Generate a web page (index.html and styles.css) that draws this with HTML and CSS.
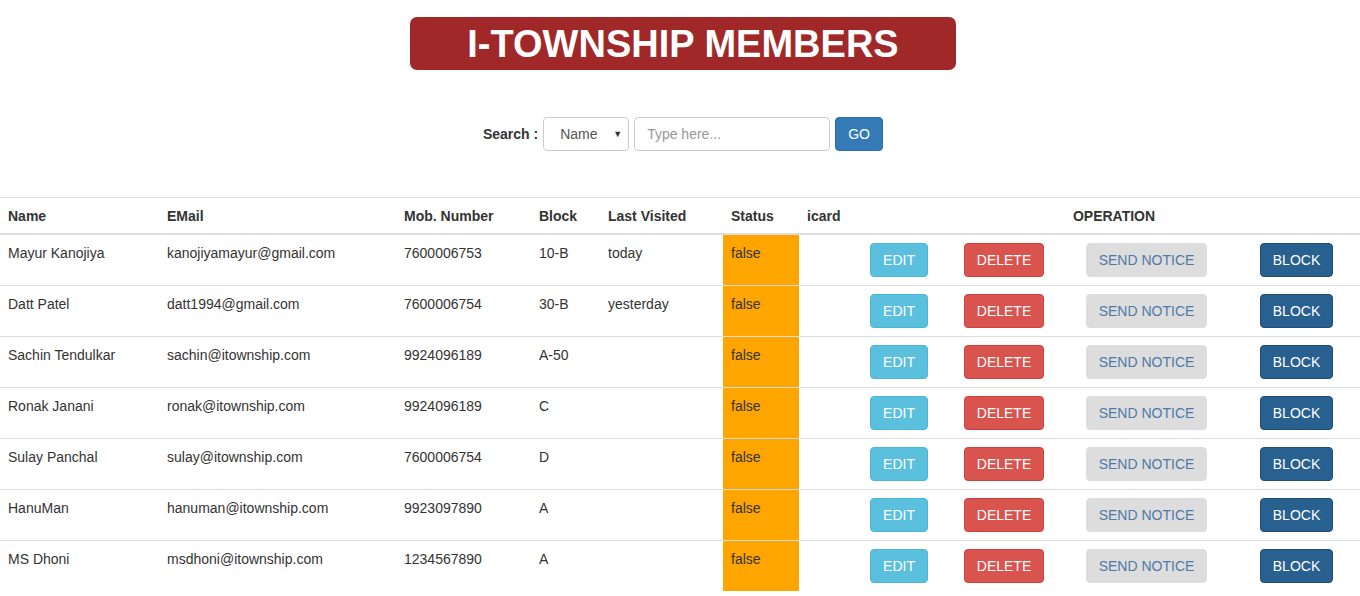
FILE: index.html
```html
<!DOCTYPE html>
<html>
<head>
<meta charset="utf-8">
<link rel="stylesheet" href="styles.css">
</head>
<body>
<header class="top">
  <h1 class="title">I-TOWNSHIP MEMBERS</h1>
  <form class="search">
    <label class="search-label">Search :</label>
    <div class="select"><span>Name</span><span class="caret">&#9660;</span></div>
    <input class="search-input" type="text" placeholder="Type here...">
    <button class="btn btn-go" type="button">GO</button>
  </form>
</header>
<table class="members">
  <colgroup>
    <col class="c-name"><col class="c-email"><col class="c-mob"><col class="c-block"><col class="c-last"><col class="c-status"><col class="c-icard"><col class="c-edit"><col class="c-del"><col class="c-notice"><col class="c-blk">
  </colgroup>
  <thead>
    <tr><th>Name</th><th>EMail</th><th>Mob. Number</th><th>Block</th><th>Last Visited</th><th>Status</th><th>icard</th><th colspan="4" class="op">OPERATION</th></tr>
  </thead>
  <tbody>
    <tr><td>Mayur Kanojiya</td><td>kanojiyamayur@gmail.com</td><td>7600006753</td><td>10-B</td><td>today</td><td class="status">false</td><td></td><td><button class="btn btn-edit">EDIT</button></td><td><button class="btn btn-del">DELETE</button></td><td><button class="btn btn-notice">SEND NOTICE</button></td><td><button class="btn btn-block">BLOCK</button></td></tr>
    <tr><td>Datt Patel</td><td>datt1994@gmail.com</td><td>7600006754</td><td>30-B</td><td>yesterday</td><td class="status">false</td><td></td><td><button class="btn btn-edit">EDIT</button></td><td><button class="btn btn-del">DELETE</button></td><td><button class="btn btn-notice">SEND NOTICE</button></td><td><button class="btn btn-block">BLOCK</button></td></tr>
    <tr><td>Sachin Tendulkar</td><td>sachin@itownship.com</td><td>9924096189</td><td>A-50</td><td></td><td class="status">false</td><td></td><td><button class="btn btn-edit">EDIT</button></td><td><button class="btn btn-del">DELETE</button></td><td><button class="btn btn-notice">SEND NOTICE</button></td><td><button class="btn btn-block">BLOCK</button></td></tr>
    <tr><td>Ronak Janani</td><td>ronak@itownship.com</td><td>9924096189</td><td>C</td><td></td><td class="status">false</td><td></td><td><button class="btn btn-edit">EDIT</button></td><td><button class="btn btn-del">DELETE</button></td><td><button class="btn btn-notice">SEND NOTICE</button></td><td><button class="btn btn-block">BLOCK</button></td></tr>
    <tr><td>Sulay Panchal</td><td>sulay@itownship.com</td><td>7600006754</td><td>D</td><td></td><td class="status">false</td><td></td><td><button class="btn btn-edit">EDIT</button></td><td><button class="btn btn-del">DELETE</button></td><td><button class="btn btn-notice">SEND NOTICE</button></td><td><button class="btn btn-block">BLOCK</button></td></tr>
    <tr><td>HanuMan</td><td>hanuman@itownship.com</td><td>9923097890</td><td>A</td><td></td><td class="status">false</td><td></td><td><button class="btn btn-edit">EDIT</button></td><td><button class="btn btn-del">DELETE</button></td><td><button class="btn btn-notice">SEND NOTICE</button></td><td><button class="btn btn-block">BLOCK</button></td></tr>
    <tr><td>MS Dhoni</td><td>msdhoni@itownship.com</td><td>1234567890</td><td>A</td><td></td><td class="status">false</td><td></td><td><button class="btn btn-edit">EDIT</button></td><td><button class="btn btn-del">DELETE</button></td><td><button class="btn btn-notice">SEND NOTICE</button></td><td><button class="btn btn-block">BLOCK</button></td></tr>
  </tbody>
</table>
</body>
</html>
```
FILE: styles.css
```css
* { box-sizing: border-box; }
html, body { margin: 0; padding: 0; background: #fff; }
body {
  font-family: "Liberation Sans", Arial, sans-serif;
  font-size: 14px;
  line-height: 20px;
  color: #333;
}
.top {
  display: flex;
  flex-direction: column;
  align-items: center;
  padding-top: 17px;
  padding-left: 6px;
}
.title {
  margin: 0;
  width: 546px;
  height: 53px;
  background: #a02828;
  color: #fff;
  border-radius: 7px;
  font-size: 38px;
  font-weight: bold;
  line-height: 54px;
  text-align: center;
}
.search {
  margin: 47px 0 0;
  display: flex;
  align-items: center;
  gap: 5px;
  height: 34px;
}
.search-label { font-weight: bold; }
.select {
  width: 86px;
  height: 34px;
  border: 1px solid #ccc;
  border-radius: 4px;
  display: flex;
  align-items: center;
  justify-content: space-between;
  padding: 0 6px 0 16px;
  color: #555;
}
.caret { font-size: 9px; color: #333; }
.search-input {
  width: 196px;
  height: 34px;
  border: 1px solid #ccc;
  border-radius: 4px;
  padding: 0 12px;
  font-family: inherit;
  font-size: 14px;
  color: #555;
}
.search-input::placeholder { color: #999; }
.btn {
  display: inline-block;
  height: 34px;
  padding: 6px 0;
  border: 1px solid transparent;
  border-radius: 4px;
  font-family: inherit;
  font-size: 14px;
  line-height: 20px;
  text-align: center;
  color: #fff;
  cursor: pointer;
}
.btn-go { width: 48px; background: #337ab7; border-color: #2e6da4; }
.btn-edit { width: 58px; background: #5bc0de; border-color: #46b8da; }
.btn-del { width: 80px; background: #d9534f; border-color: #d43f3a; }
.btn-notice { width: 121px; background: #ddd; border-color: #ddd; color: #4d7aa8; }
.btn-block { width: 73px; background: #286090; border-color: #204d74; }

.members {
  margin-top: 46px;
  width: 100%;
  border-collapse: collapse;
  table-layout: fixed;
}
.c-name { width: 159px; }
.c-email { width: 237px; }
.c-mob { width: 135px; }
.c-block { width: 69px; }
.c-last { width: 123px; }
.c-status { width: 76px; }
.c-icard { width: 63px; }
.c-edit { width: 94px; }
.c-del { width: 122px; }
.c-notice { width: 174px; }
.c-blk { width: 108px; }
.members th {
  text-align: left;
  font-weight: bold;
  padding: 8px 8px 7px;
  border-top: 1px solid #ddd;
  border-bottom: 2px solid #ddd;
  vertical-align: bottom;
  white-space: nowrap;
}
.members th.op { text-align: center; padding-left: 14px; }
.members td {
  padding: 8px;
  border-top: 1px solid #ddd;
  vertical-align: top;
  white-space: nowrap;
}
.members td.status { background: #ffa500; }
```
